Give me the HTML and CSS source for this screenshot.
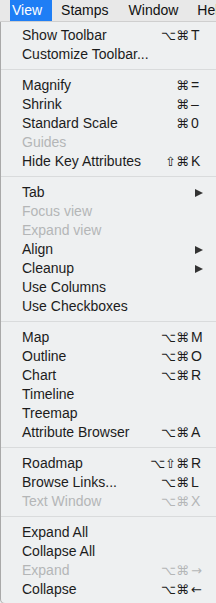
FILE: index.html
```html
<!DOCTYPE html>
<html>
<head>
<meta charset="utf-8">
<link rel="stylesheet" href="styles.css">
</head>
<body>
<div class="menubar">
  <span class="mb-item mb-active">View</span>
  <span class="mb-item mb-stamps">Stamps</span>
  <span class="mb-item mb-window">Window</span>
  <span class="mb-item mb-help">Help</span>
</div>
<div class="menu">
  <div class="row"><span class="label">Show Toolbar</span><span class="mods">⌥⌘</span><span class="key">T</span></div>
  <div class="row"><span class="label">Customize Toolbar...</span></div>
  <div class="sep"></div>
  <div class="row"><span class="label">Magnify</span><span class="mods">⌘</span><span class="key">=</span></div>
  <div class="row"><span class="label">Shrink</span><span class="mods">⌘</span><span class="key">–</span></div>
  <div class="row"><span class="label">Standard Scale</span><span class="mods">⌘</span><span class="key">0</span></div>
  <div class="row disabled"><span class="label">Guides</span></div>
  <div class="row"><span class="label">Hide Key Attributes</span><span class="mods">⇧⌘</span><span class="key">K</span></div>
  <div class="sep"></div>
  <div class="row"><span class="label">Tab</span><span class="key"><span class="arrow"></span></span></div>
  <div class="row disabled"><span class="label">Focus view</span></div>
  <div class="row disabled"><span class="label">Expand view</span></div>
  <div class="row"><span class="label">Align</span><span class="key"><span class="arrow"></span></span></div>
  <div class="row"><span class="label">Cleanup</span><span class="key"><span class="arrow"></span></span></div>
  <div class="row"><span class="label">Use Columns</span></div>
  <div class="row"><span class="label">Use Checkboxes</span></div>
  <div class="sep"></div>
  <div class="row"><span class="label">Map</span><span class="mods">⌥⌘</span><span class="key">M</span></div>
  <div class="row"><span class="label">Outline</span><span class="mods">⌥⌘</span><span class="key">O</span></div>
  <div class="row"><span class="label">Chart</span><span class="mods">⌥⌘</span><span class="key">R</span></div>
  <div class="row"><span class="label">Timeline</span></div>
  <div class="row"><span class="label">Treemap</span></div>
  <div class="row"><span class="label">Attribute Browser</span><span class="mods">⌥⌘</span><span class="key">A</span></div>
  <div class="sep"></div>
  <div class="row"><span class="label">Roadmap</span><span class="mods">⌥⇧⌘</span><span class="key">R</span></div>
  <div class="row"><span class="label">Browse Links...</span><span class="mods">⌥⌘</span><span class="key">L</span></div>
  <div class="row disabled"><span class="label">Text Window</span><span class="mods">⌥⌘</span><span class="key">X</span></div>
  <div class="sep"></div>
  <div class="row"><span class="label">Expand All</span></div>
  <div class="row"><span class="label">Collapse All</span></div>
  <div class="row disabled"><span class="label">Expand</span><span class="mods">⌥⌘</span><span class="key arrowkey">→</span></div>
  <div class="row"><span class="label">Collapse</span><span class="mods">⌥⌘</span><span class="key arrowkey">←</span></div>
</div>
</body>
</html>
```
FILE: styles.css
```css
html, body {
  margin: 0;
  padding: 0;
  width: 216px;
  height: 603px;
  overflow: hidden;
  background: #eef0f1;
  font-family: "Liberation Sans", Arial, sans-serif;
  font-size: 14px;
  color: #1c1c1c;
}

.menubar {
  height: 21px;
  border-bottom: 1px solid #cfcfcf;
  background: #e8e8e8;
  display: flex;
  white-space: nowrap;
  overflow: hidden;
}

.mb-item {
  line-height: 21px;
  color: #111;
}

.mb-active {
  margin-left: 10px;
  padding: 0 10px 0 2px;
  background: #1f7ef5;
  color: #fff;
}

.mb-stamps { margin-left: 9px; }
.mb-window { margin-left: 20px; }
.mb-help { margin-left: 19px; }

.menu {
  height: 573px;
  padding: 4px 0;
  border-left: 1px solid #a9a9a9;
  border-bottom: 1px solid #b5b5b5;
  border-bottom-left-radius: 5px;
  background: #eef0f1;
}

.row {
  height: 19px;
  line-height: 19px;
  display: flex;
  align-items: center;
  padding: 0 11px 0 21px;
  white-space: nowrap;
}

.label {
  flex: 1;
}

.mods {
  font-family: "DejaVu Sans", sans-serif;
  font-size: 13px;
  margin-right: 2px;
  color: #1c1c1c;
}

.key {
  width: 14px;
  display: flex;
  align-items: center;
}

.arrowkey {
  font-family: "DejaVu Sans", sans-serif;
  font-size: 13px;
}

.disabled,
.disabled .mods {
  color: #b4b6b7;
}

.arrow {
  margin-left: 4px;
  width: 0;
  height: 0;
  border-top: 4.5px solid transparent;
  border-bottom: 4.5px solid transparent;
  border-left: 8px solid #333;
}

.sep {
  height: 12px;
  box-sizing: border-box;
  padding-top: 5px;
}

.sep::before {
  content: "";
  display: block;
  height: 1px;
  background: #d9dbdc;
}
```
